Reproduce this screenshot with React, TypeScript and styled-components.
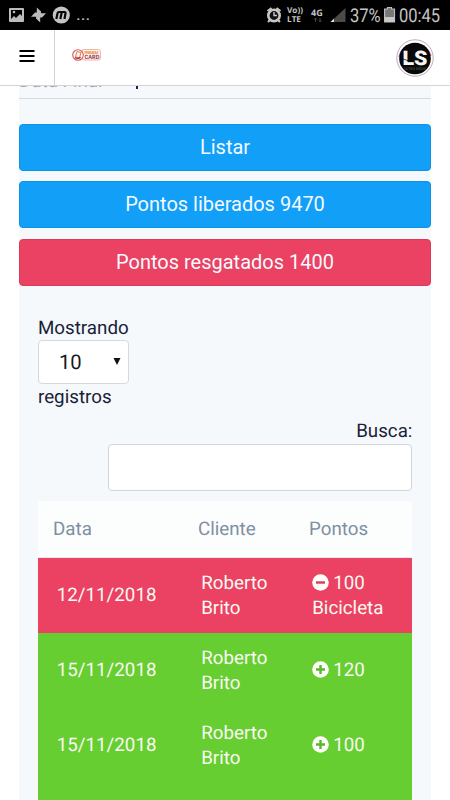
import React from "react";
import styled, { createGlobalStyle } from "styled-components";

const GlobalStyle = createGlobalStyle`
  * { box-sizing: border-box; }
  html, body { margin: 0; height: 800px; overflow: hidden; background: #fff; }
  body, select, input, button { font-family: Roboto, sans-serif; }
`;

const Screen = styled.div`
  width: 450px;
  height: 800px;
  overflow: hidden;
  display: flex;
  flex-direction: column;
  background: #fff;
  color: #1b1e38;
  font-size: 18.75px;
  text-rendering: geometricPrecision;
`;

const StatusBar = styled.div`
  height: 30px;
  flex: none;
  display: flex;
  align-items: center;
  background: #000;
  color: #c4c4c4;
  svg { display: block; flex: none; }
`;

const Dots = styled.span`
  width: 190px;
  font-size: 18px;
  line-height: 34px;
`;

const NetworkLabel = styled.div<{ $size: number; $width: number }>`
  width: ${(p) => p.$width}px;
  flex: none;
  font-family: "Open Sans", sans-serif;
  font-size: ${(p) => p.$size}px;
  font-weight: 700;
  line-height: 9px;
  white-space: nowrap;
`;

const NetworkType = styled(NetworkLabel)`
  padding-bottom: 6px;
`;

const StatusText = styled.span<{ $width: number }>`
  width: ${(p) => p.$width}px;
  flex: none;
  font-size: 19px;
  line-height: 31px;
  white-space: nowrap;
  transform: scaleX(0.87);
  transform-origin: left center;
`;

const Header = styled.header`
  height: 56px;
  flex: none;
  display: flex;
  align-items: stretch;
  border-bottom: 1px solid #d3d5d8;
  background: #fff;
`;

const MenuButton = styled.button`
  width: 55px;
  padding: 0 0 3px 19px;
  border: 0;
  border-right: 1px solid #d0d2d6;
  background: none;
  display: flex;
  align-items: center;
`;

const Brand = styled.div`
  display: flex;
  align-items: center;
  padding: 0 0 5px 17px;
`;

const Avatar = styled.div`
  margin: 9px 16px 0 auto;
  width: 38px;
  height: 38px;
`;

const Panel = styled.main`
  margin: 0 19px;
  flex: 1;
  min-height: 0;
  overflow: hidden;
  background: #f5f9fc;
`;

const DateField = styled.div`
  height: 13px;
  overflow: hidden;
  border-bottom: 1px solid #d6dae0;
  display: flex;
  align-items: flex-end;
  color: #a5abb7;
`;

const DateLabel = styled.span`
  width: 117px;
  margin-bottom: 6px;
  line-height: 22px;
`;

const DateValue = styled.span`
  width: 2px;
  height: 3px;
  margin-bottom: 9px;
  background: #20233c;
`;

const Actions = styled.div`
  display: flex;
  flex-direction: column;
  gap: 10.4px;
  padding-top: 25px;
`;

const ActionButton = styled.button<{ $danger?: boolean }>`
  height: 47px;
  padding: 0 0 1px;
  border: 1px solid ${(p) => (p.$danger ? "#dc3a5a" : "#0d92e6")};
  border-radius: 4px;
  background: ${(p) => (p.$danger ? "#eb4162" : "#119ff8")};
  color: #f4faff;
  font-size: 20px;
  line-height: 44px;
`;

const Listing = styled.section`
  padding: 31.2px 18.6px 0 19px;
`;

const LengthControl = styled.label`
  display: flex;
  flex-direction: column;
  width: 91px;
  line-height: 22px;
`;

const SelectBox = styled.span`
  height: 44px;
  margin: 1px 0 1.8px;
  padding: 0 7px 0 20px;
  border: 1px solid #d5d9de;
  border-radius: 4px;
  background: #fff;
  display: flex;
  align-items: center;
  justify-content: space-between;
  font-size: 20.2px;
  color: #17191f;
`;

const SearchControl = styled.label`
  display: flex;
  flex-direction: column;
  align-items: flex-end;
  margin-top: 12.6px;
  line-height: 22px;
`;

const SearchInput = styled.input`
  width: 304.5px;
  height: 47px;
  margin-top: 1.4px;
  border: 1px solid #d1d5da;
  border-radius: 4px;
  background: #fff;
`;

const Table = styled.div`
  margin-top: 10px;
`;

const HeadRow = styled.div`
  display: grid;
  grid-template-columns: 145px 111px 1fr;
  height: 57px;
  padding-left: 15px;
  line-height: 56px;
  color: #7f8fa4;
  background: #fcfdfd;
  border-bottom: 1px solid #e6e9ed;
`;

const Row = styled.div<{ $redeemed?: boolean }>`
  display: grid;
  grid-template-columns: 144.5px 111px 1fr;
  align-items: center;
  height: 75px;
  padding: 1px 0 0 18.7px;
  line-height: 25px;
  color: #f9f9f2;
  background: ${(p) => (p.$redeemed ? "#eb4162" : "#66ce30")};
`;

const Customer = styled.span`
  width: 80px;
`;

const Points = styled.span`
  svg { vertical-align: -2px; margin-right: 4px; }
`;

interface Entry {
  date: string;
  points: string;
  redeemed?: boolean;
  item?: string;
}

const entries: Entry[] = [
  { date: "12/11/2018", points: "100", redeemed: true, item: "Bicicleta" },
  { date: "15/11/2018", points: "120" },
  { date: "15/11/2018", points: "100" },
  { date: "15/11/2018", points: "100" },
];

function PointIcon({ minus }: { minus?: boolean }) {
  return (
    <svg width="17" height="17" viewBox="0 0 17 17">
      <circle cx="8.5" cy="8.5" r="8.3" fill="#fffdfa" />
      <path
        d={minus ? "M4 8.5h9" : "M4 8.5h9M8.5 4v9"}
        stroke={minus ? "#d93c5a" : "#58b82b"}
        strokeWidth="2.4"
      />
    </svg>
  );
}

function NotificationIcons() {
  return (
    <svg width="76" height="30" viewBox="0 0 76 30">
      <path
        fill="#bcbcbc"
        fillRule="evenodd"
        d="M10 8h13q1 0 1 1v12q0 1-1 1H10q-1 0-1-1V9q0-1 1-1Zm1 2v9l3-3 2 2 4-4 2 2v-6Z"
      />
      <circle cx="14" cy="12" r="1.3" fill="#bcbcbc" />
      <g fill="#bcbcbc">
        {[0, 90, 180, 270].map((angle) => (
          <path key={angle} d="M39 15.500 36.800 13.200V7.500L41 11.500V13.500Z" transform={`rotate(${angle} 38.5 15)`} />
        ))}
      </g>
      <circle cx="61.3" cy="15" r="8.6" fill="#c4c4c4" />
      <path
        d="m56.300 19 1.300-6q.2-1 1.200-1h5.500q1.500 0 1.200 1.300L64.500 19M60.300 19l1.500-7"
        fill="none"
        stroke="#080808"
        strokeWidth="2.2"
      />
    </svg>
  );
}

function AlarmIcon() {
  return (
    <svg width="21" height="30" viewBox="-0.5 0 21 30">
      <circle cx="7.5" cy="15.5" r="5.7" fill="#111" stroke="#c8c8c8" strokeWidth="2.6" />
      <path d="m1 11 4-3M14 11l-4-3M3.500 20l-2 2M11.500 20l2 2" stroke="#c8c8c8" strokeWidth="2" />
      <path d="M7.500 12v3.500h3" fill="none" stroke="#c8c8c8" strokeWidth="1.4" />
    </svg>
  );
}

function SignalIcon() {
  return (
    <svg width="39" height="30" viewBox="0 0 39 30">
      <path d="M4.500 18v4M3 19.500l1.500-1.500L6 19.500M9 18v4M7.500 20.500 9 22l1.500-1.500" fill="none" stroke="#484848" />
      <path d="M34.500 8v14H19.500Z" fill="#4b4b4b" />
      <path d="M23 18.500V22h-3.500Z" fill="#ddd" />
    </svg>
  );
}

function BatteryIcon() {
  return (
    <svg width="15" height="30" viewBox="0 0 15 30">
      <path d="M3.500 7.500h4V9h3v13H.6V9h2.900Z" fill="#777" stroke="#bbb" strokeWidth="1.2" />
      <path d="M.6 17h10v5H.6Z" fill="#c8c8c8" />
    </svg>
  );
}

function BrandLogo() {
  return (
    <svg width="29" height="14" viewBox="0 0 29 14">
      <rect x="10" y="1.5" width="18.5" height="10.5" rx="2" fill="#fff5ef" stroke="#e7a49b" strokeWidth=".8" />
      <circle cx="6" cy="7" r="5.3" fill="#fff8ef" stroke="#d95c5b" strokeWidth="1.1" />
      <path d="m5 3.500 4 1L7.500 10l-4-1.200Z" fill="#fff9ed" stroke="#df6a45" strokeWidth=".9" />
      <path d="M3 9.500q3 2 5.500-.3" fill="none" stroke="#9d314d" strokeWidth="1.3" />
      <text x="12.5" y="5.8" fontSize="4.2" fontWeight="700" textLength="14" fill="#eb9648">PREMIUM</text>
      <text x="12.5" y="11.3" fontSize="6" fontWeight="700" textLength="15" lengthAdjust="spacingAndGlyphs" fill="#963c54">CARD</text>
    </svg>
  );
}

function AvatarLogo() {
  return (
    <svg width="38" height="38" viewBox="0 0 38 38">
      <circle cx="19" cy="19" r="18.2" fill="#fff" stroke="#ad97ad" strokeWidth=".8" />
      <path d="M3 18A16.500 16.500 0 0 1 35 17" fill="none" stroke="#cf6fa4" strokeWidth="1.2" />
      <circle cx="19" cy="19.5" r="15.8" fill="#080808" />
      <text x="6.5" y="25.5" fontFamily="Roboto" fontSize="20" fontWeight="900" textLength="25" lengthAdjust="spacingAndGlyphs" fill="#f5f5f5">LS</text>
      <path d="M7 20l6 2M24 16l7 3" stroke="#080808" strokeWidth=".7" />
      <text x="8" y="30.5" fontFamily="Roboto" fontSize="4" textLength="22" fill="#58585b">ULTRA MIDIA</text>
    </svg>
  );
}

export default function App() {
  return (
    <Screen>
      <GlobalStyle />
      <StatusBar>
        <NotificationIcons />
        <Dots>...</Dots>
        <AlarmIcon />
        <NetworkLabel $size={8.2} $width={24}>Vo))<br />LTE</NetworkLabel>
        <NetworkType $size={9} $width={0}>4G</NetworkType>
        <SignalIcon />
        <StatusText $width={34}>37%</StatusText>
        <BatteryIcon />
        <StatusText $width={50}>00:45</StatusText>
      </StatusBar>
      <Header>
        <MenuButton aria-label="Menu">
          <svg width="16" height="14" viewBox="0 0 16 14">
            <path d="M.5 2h15M.5 7h15M.5 12h15" stroke="#000" strokeWidth="2.2" />
          </svg>
        </MenuButton>
        <Brand>
          <BrandLogo />
        </Brand>
        <Avatar>
          <AvatarLogo />
        </Avatar>
      </Header>
      <Panel>
        <DateField>
          <DateLabel>Data Final</DateLabel>
          <DateValue />
        </DateField>
        <Actions>
          <ActionButton>Listar</ActionButton>
          <ActionButton>Pontos liberados 9470</ActionButton>
          <ActionButton $danger>Pontos resgatados 1400</ActionButton>
        </Actions>
        <Listing>
          <LengthControl>
            Mostrando
            <SelectBox>
              10
              <svg width="8" height="8" viewBox="0 0 8 8">
                <path d="M.5 0h7L4 7Z" fill="#111" />
              </svg>
            </SelectBox>
            registros
          </LengthControl>
          <SearchControl>
            Busca:
            <SearchInput />
          </SearchControl>
          <Table>
            <HeadRow>
              <span>Data</span>
              <span>Cliente</span>
              <span>Pontos</span>
            </HeadRow>
            {entries.map((entry, i) => (
              <Row key={i} $redeemed={entry.redeemed}>
                <span>{entry.date}</span>
                <Customer>Roberto Brito</Customer>
                <Points>
                  <PointIcon minus={entry.redeemed} />
                  {entry.points}
                  {entry.item && <div>{entry.item}</div>}
                </Points>
              </Row>
            ))}
          </Table>
        </Listing>
      </Panel>
    </Screen>
  );
}
